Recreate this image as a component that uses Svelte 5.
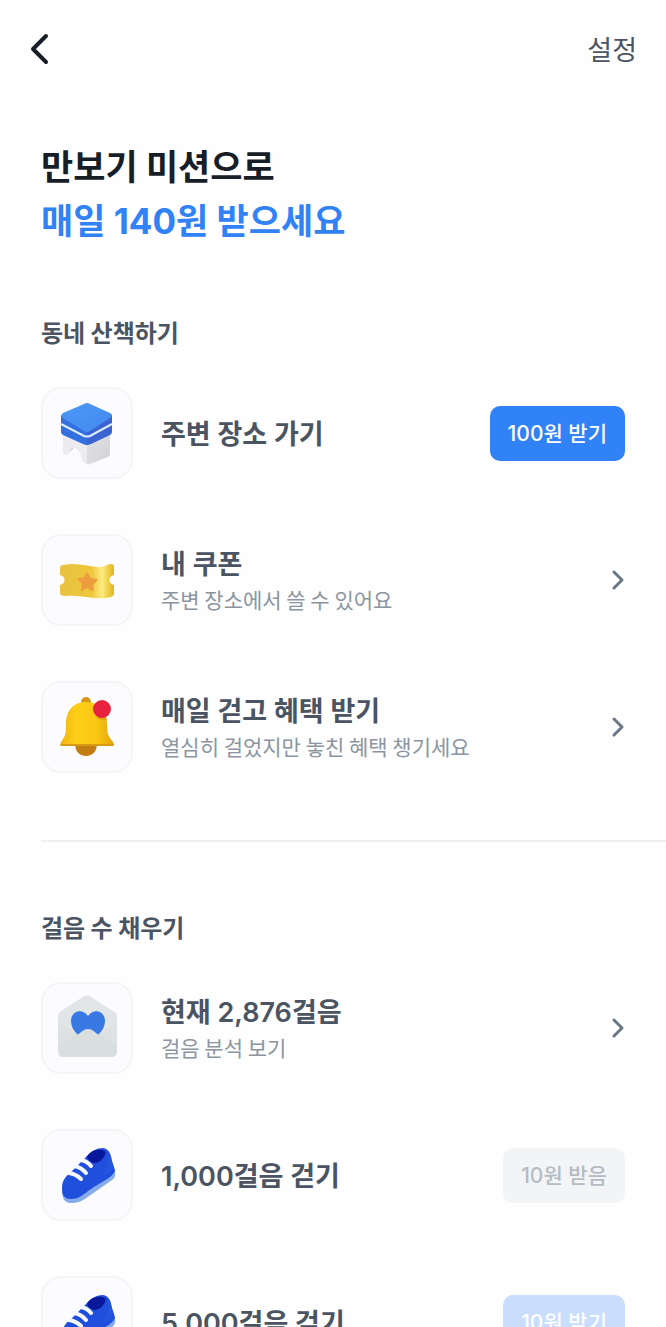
<script>
  let walkMissions = [
    { icon: "stool", title: "주변 장소 가기", reward: "100원 받기", state: "ready" },
    { icon: "coupon", title: "내 쿠폰", detail: "주변 장소에서 쓸 수 있어요" },
    {
      icon: "bell",
      title: "매일 걷고 혜택 받기",
      detail: "열심히 걸었지만 놓친 혜택 챙기세요",
    },
  ];

  let stepMissions = $state([
    { icon: "letter", title: "현재 2,876걸음", detail: "걸음 분석 보기" },
    { icon: "shoe", title: "1,000걸음 걷기", reward: "10원 받음", state: "done" },
    { icon: "shoe", title: "5,000걸음 걷기", reward: "10원 받기", state: "locked" },
  ]);
</script>

{#snippet stool()}
  <defs>
    <linearGradient id="seat" x1="0" y1="0" x2="1" y2="1">
      <stop offset="0" stop-color="#4b98f5" />
      <stop offset="1" stop-color="#428af0" />
    </linearGradient>
    <linearGradient id="leg" x1="0" y1="0" x2="1" y2="1">
      <stop offset="0" stop-color="#e2e2e5" />
      <stop offset="1" stop-color="#d3d2d7" />
    </linearGradient>
  </defs>
  <path d="M24 67v-5l8-3v3l-4 3z" fill="#c9c9cf" />
  <path
    d="M22 44 47 56v21q-3 0-5-2c-2-2-1-6-3-9-3-6-9-7-10-2 0 2-1 3-2 3l-3 1q-2 0-2-2z"
    fill="#ececee"
  />
  <path d="M46 56 69 44v23q0 2-2 3L49 77q-2 1-3 0z" fill="url(#leg)" />
  <path d="M20 28 46 42v16q-2 0-4-1L22 48q-2-1-2-3z" fill="#3570e2" />
  <path d="M71 28 46 42v16q2 0 4-1l19-9q2-1 2-3z" fill="#3b63d2" />
  <path d="m20 37 23 12q3 1 6 0l22-12" fill="none" stroke="#dcecff" stroke-width="2" />
  <path d="M43 17q3-2 6 0l20 9q4 2 0 5L49 44q-3 2-6 0L22 31q-3-3 0-5z" fill="url(#seat)" />
{/snippet}

{#snippet coupon()}
  <defs>
    <linearGradient id="paper">
      <stop offset="0" stop-color="#e9c342" />
      <stop offset="0.58" stop-color="#edc639" />
      <stop offset="0.78" stop-color="#fbec83" />
      <stop offset="0.9" stop-color="#efcd42" />
      <stop offset="1" stop-color="#dfb62d" />
    </linearGradient>
  </defs>
  <path
    d="M22 31c13-3 24 1 34 2 7 1 9-3 14-3q3 0 3 3v8c-6 1-6 9 0 10v9q0 2-3 3c-15 4-29-3-46-1q-5 0-5-3v-8c6-1 6-9 0-10v-7q0-3 3-3z"
    fill="url(#paper)"
  />
  <path
    d="m47 39 3 5 6 1q1 1 0 2l-4 4 1 5q0 2-2 1l-5-3-5 3q-2 0-1-2l1-5-4-4q-1-2 1-2l5-1 2-4q1-2 2 0z"
    fill="#ec9d3d"
  />
{/snippet}

{#snippet bell()}
  <defs>
    <linearGradient id="dome">
      <stop offset="0" stop-color="#eeb116" />
      <stop offset="0.3" stop-color="#fdce17" />
      <stop offset="0.65" stop-color="#fbc815" />
      <stop offset="1" stop-color="#e5a20b" />
    </linearGradient>
    <clipPath id="dome-shape">
      <path d="M25 43c0-15 9-22 20-22s21 7 21 22c0 11 2 13 6 18q2 4-1 4H21q-3 0-1-4c4-5 5-8 5-18z" />
    </clipPath>
  </defs>
  <circle cx="45" cy="21" r="5" fill="#d6981a" />
  <path d="M34 62h22c0 8-4 13-11 13s-11-5-11-13z" fill="#c27e13" />
  <g clip-path="url(#dome-shape)">
    <path d="M18 18h56v47H18z" fill="url(#dome)" />
    <path d="M55 36q5 4 12 3v-8z" fill="#e5a20f" />
    <path d="M18 63h56v2H18z" fill="#d89c14" />
  </g>
  <circle cx="61" cy="28" r="9" fill="#e7233e" />
{/snippet}

{#snippet letter()}
  <path d="M17 34q0-3 3-5l22-14q4-3 8 0l22 14q4 2 4 5v35q0 6-6 6H23q-6 0-6-6z" fill="#e1e5e6" />
  <path d="M17 40v22l19-9zM76 40v22l-19-9z" fill="#dde1e2" />
  <path d="M17 63 41 49q6-3 12 0l23 14v6q0 6-6 6H23q-6 0-6-6z" fill="#d9dede" />
  <path
    d="M36 52q-6-6-6-13c0-11 12-13 17-5 5-8 17-6 17 5q0 7-6 13-1 1-3-1-8-8-16 0-2 2-3 1z"
    fill="#3979e4"
  />
{/snippet}

{#snippet shoe()}
  <path
    d="M21 60c0 7 1 15 10 14 9 0 14-5 20-9l20-14q4-3 3-8l-1-5z"
    fill="#86abea"
  />
  <path
    d="M21 59c0-8 4-12 10-17l15-15c4-5 10-8 16-8 6 1 8 6 9 13q2 5 3 10c-3 7-16 12-24 18-7 5-12 10-20 10-7 0-9-4-9-11z"
    fill="#1f4fdc"
  />
  <path d="M46 28c3-6 9-8 15-7q5 1 3 5-4 8-11 8-5-1-7-6z" fill="#09179b" />
  <path d="M66 23c4 5 5 9 6 14 0 6-8 8-12 11 6-9 9-16 6-25z" fill="#2555df" />
  <path
    d="M28 44q7 1 12 6M33 37q7 1 12 7M40 31q6 1 10 6"
    fill="none"
    stroke="#f5f8ff"
    stroke-width="4"
    stroke-linecap="round"
  />
{/snippet}

{#snippet tile(icon)}
  <svg class="tile" viewBox="2 2 88 88" aria-hidden="true">
    {#if icon === "stool"}
      {@render stool()}
    {:else if icon === "coupon"}
      {@render coupon()}
    {:else if icon === "bell"}
      {@render bell()}
    {:else if icon === "letter"}
      {@render letter()}
    {:else}
      {@render shoe()}
    {/if}
  </svg>
{/snippet}

{#snippet missionList(missions)}
  <ul>
    {#each missions as mission (mission.title)}
      <li>
        {#if mission.reward}
          <div class="row">
            {@render tile(mission.icon)}
            <strong class="text title">{mission.title}</strong>
            <button
              class={["reward", mission.state]}
              disabled={mission.state !== "ready"}
            >
              {mission.reward}
            </button>
          </div>
        {:else}
          <a class="row" href="#{mission.icon}">
            {@render tile(mission.icon)}
            <span class="text">
              <strong class="title">{mission.title}</strong>
              <span class="detail">{mission.detail}</span>
            </span>
            <svg class="chevron" viewBox="0 0 16 24" aria-hidden="true">
              <path d="m5 4 8 8-8 8" />
            </svg>
          </a>
        {/if}
      </li>
    {/each}
  </ul>
{/snippet}

<div class="screen">
  <header>
    <button class="back" aria-label="뒤로">
      <svg viewBox="0 0 20 32" aria-hidden="true">
        <path d="M17 3 4 16l13 13" />
      </svg>
    </button>
    <a href="#settings">설정</a>
  </header>

  <main>
    <h1>만보기 미션으로<br /><em>매일 140원 받으세요</em></h1>

    <section aria-labelledby="walk-label">
      <h2 id="walk-label">동네 산책하기</h2>
      {@render missionList(walkMissions)}
    </section>

    <hr />

    <section aria-labelledby="steps-label">
      <h2 id="steps-label">걸음 수 채우기</h2>
      {@render missionList(stepMissions)}
    </section>
  </main>
</div>

<style>
  :global(body) {
    background: #fefefe;
  }

  .screen {
    height: 100vh;
    overflow-y: auto;
    scrollbar-width: none;
    color: #4a5462;
    font-family: "Noto Sans CJK KR", sans-serif;
  }

  header {
    display: flex;
    align-items: center;
    justify-content: space-between;
    height: 98px;
    padding: 0 29px;
  }

  header a {
    padding-bottom: 2px;
    color: #4a5462;
    font-size: 27px;
    text-decoration: none;
  }

  button {
    border: 0;
    font-family: inherit;
  }

  .back {
    display: flex;
    padding: 0;
    background: none;
  }

  .back svg {
    width: 20px;
    height: 32px;
    fill: none;
    stroke: #171e28;
    stroke-width: 4;
    stroke-linecap: round;
    stroke-linejoin: round;
  }

  main {
    padding: 42px 0 41px 41px;
  }

  h1 {
    margin: 0 0 66px;
    color: #171e28;
    font-size: 35px;
    font-weight: 700;
    line-height: 54px;
  }

  h1,
  .title,
  .reward {
    font-family: "Inter", "Noto Sans CJK KR", sans-serif;
  }

  h1 em {
    color: #3182f6;
    font-style: normal;
  }

  h2 {
    margin: 0 0 37px;
    font-size: 24px;
    font-weight: 700;
    line-height: 36px;
  }

  section {
    padding-right: 41px;
  }

  hr {
    height: 2px;
    margin: 67px 0;
    border: 0;
    background: #eeeff1;
  }

  ul {
    display: flex;
    flex-direction: column;
    gap: 55px;
    margin: 0;
    padding: 0;
    list-style: none;
  }

  .row {
    display: flex;
    align-items: center;
    color: inherit;
    text-decoration: none;
  }

  .tile {
    box-sizing: border-box;
    flex: none;
    width: 92px;
    height: 92px;
    margin-right: 28px;
    border: 2px solid #f4f5f7;
    border-radius: 20px;
    background: #fcfcfe;
  }

  .text {
    flex: 1;
    min-width: 0;
  }

  .title,
  .detail {
    display: block;
  }

  .title {
    font-size: 27px;
    font-weight: 600;
    line-height: 38px;
  }

  .row > .title {
    padding-top: 3px;
  }

  .detail {
    color: #8b95a1;
    font-size: 21px;
    line-height: 30px;
  }

  .chevron {
    flex: none;
    width: 16px;
    height: 24px;
    fill: none;
    stroke: #6b7684;
    stroke-width: 3;
    stroke-linecap: round;
    stroke-linejoin: round;
  }

  .reward {
    flex: none;
    height: 55px;
    padding: 0 18px 2px;
    border-radius: 10px;
    font-size: 21px;
    font-weight: 500;
  }

  .ready {
    background: #3182f6;
    color: #fff;
  }

  .done {
    background: #f2f4f6;
    color: #b5bbc3;
  }

  .locked {
    background: #c8defc;
    color: #fff;
  }
</style>
